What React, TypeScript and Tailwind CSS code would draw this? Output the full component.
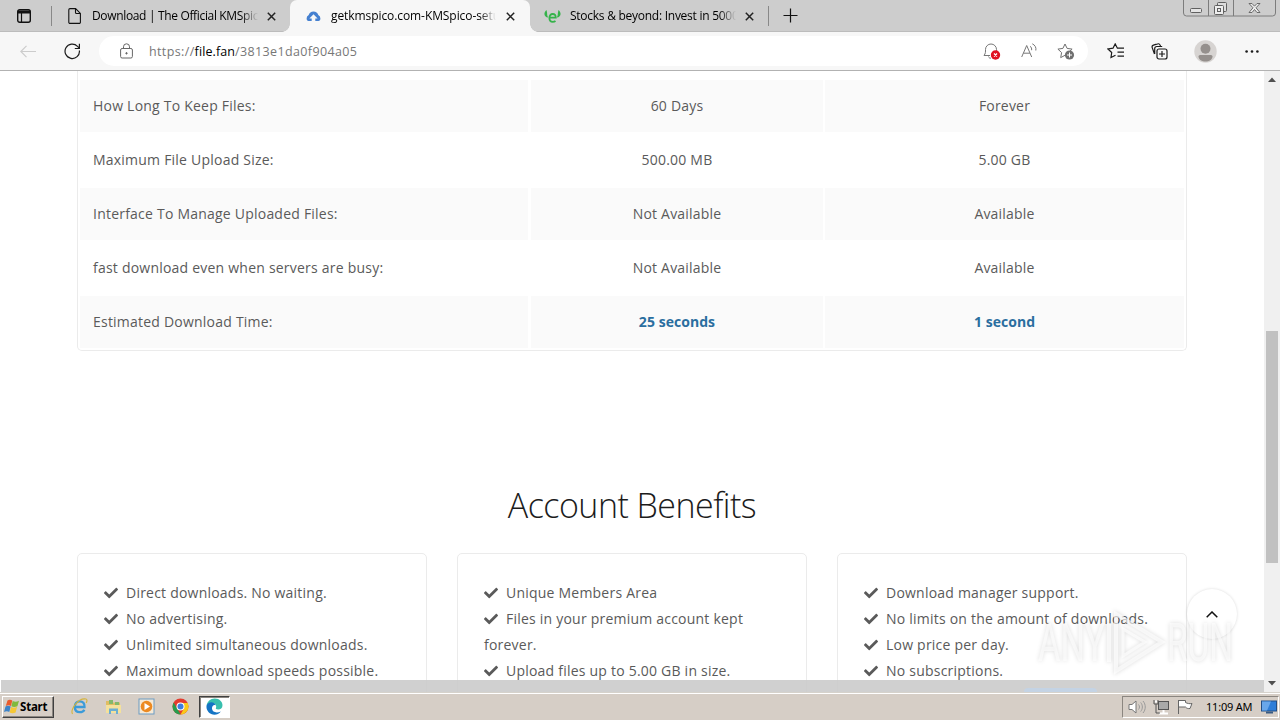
import type { ReactNode } from "react"
import { FaCheck } from "react-icons/fa"

const rows = [
  { label: "How Long To Keep Files:", free: "60 Days", premium: "Forever" },
  { label: "Maximum File Upload Size:", free: "500.00 MB", premium: "5.00 GB" },
  { label: "Interface To Manage Uploaded Files:", free: "Not Available", premium: "Available" },
  { label: "fast download even when servers are busy:", free: "Not Available", premium: "Available" },
  { label: "Estimated Download Time:", free: "25 seconds", premium: "1 second", strong: true },
]

const benefits = [
  ["Direct downloads. No waiting.", "No advertising.", "Unlimited simultaneous downloads.", "Maximum download speeds possible."],
  ["Unique Members Area", "Files in your premium account kept forever.", "Upload files up to 5.00 GB in size."],
  ["Download manager support.", "No limits on the amount of downloads.", "Low price per day.", "No subscriptions."],
]

function CloseX() {
  return (
    <svg className="h-[9px] w-[9px] shrink-0" viewBox="0 0 9 9" fill="none" stroke="#222" strokeWidth="1.5">
      <path d="M.8.8l7.4 7.4M8.2.8L.8 8.2" />
    </svg>
  )
}

function TabTitle({ children, className }: { children: ReactNode; className: string }) {
  return (
    <span className={"block shrink-0 overflow-hidden whitespace-nowrap text-[12px] leading-[18px] text-black mask-r-from-90% mask-r-to-100% " + className}>
      {children}
    </span>
  )
}

function TabStrip() {
  return (
    <div className="flex h-8 shrink-0 bg-[#cdcdcd] shadow-[inset_0_-1px_0_#bcbcbc]">
      <div className="flex w-[51px] items-center pl-[17px]">
        <svg className="h-[14px] w-[14px]" viewBox="0 0 14 14" fill="none" stroke="#111">
          <rect x=".7" y=".7" width="12.6" height="12.6" rx="2" strokeWidth="1.4" />
          <path d="M1 3h12" strokeWidth="3" />
          <path d="M4.5 4v9" strokeWidth="1.2" />
        </svg>
      </div>
      <div className="mt-[6px] h-5 w-px bg-[#888]" />
      <div className="flex w-[238px] items-center pl-4">
        <svg className="h-4 w-[13px] shrink-0" viewBox="0 0 13 16" fill="none" stroke="#111" strokeWidth="1.1">
          <path d="M2 .6h5.6l4.8 4.8v8.8a1.2 1.2 0 0 1-1.2 1.2H2A1.2 1.2 0 0 1 .8 14.2V1.8A1.2 1.2 0 0 1 2 .6zM7.5.8v3.7a1 1 0 0 0 1 1h3.7" />
        </svg>
        <TabTitle className="ml-[11px] mr-[9px] w-[166px] tracking-[-0.34px]">Download | The Official KMSpico</TabTitle>
        <CloseX />
      </div>
      <div className="relative flex w-[240px] items-center rounded-t-[7px] bg-[#f7f7f7] pl-4">
        <span className="absolute -left-2 bottom-0 h-2 w-2 bg-[radial-gradient(circle_at_0_0,transparent_7.5px,#f7f7f7_8px)]" />
        <span className="absolute -right-2 bottom-0 h-2 w-2 bg-[radial-gradient(circle_at_100%_0,transparent_7.5px,#f7f7f7_8px)]" />
        <svg className="h-[14px] w-[15px] shrink-0" viewBox="0 0 15 14">
          <path d="M.6 9.800A4 4 0 0 1 2.700 6 5 5 0 0 1 12.300 6a4 4 0 0 1 2.100 3.800c0 1.200-.7 2.200-1.900 2.200H9.300V9.600h2.300L7.500 5.300 3.400 9.600h2.300V12H2.500C1.300 12 .6 11 .6 9.800z" fill="#4580d0" />
        </svg>
        <TabTitle className="ml-[10px] mr-[10px] w-[165px] tracking-[-0.08px]">getkmspico.com-KMSpico-setup</TabTitle>
        <CloseX />
      </div>
      <div className="flex w-[238px] items-center pl-[14px]">
        <svg className="h-[13px] w-[17px] shrink-0" viewBox="0 0 17 13">
          <path d="M2.400 0C-.8 3 0 7 4.200 7.500 2.600 5 3.700 3.500 2.400 0zM14.600 0c3.200 3 2.400 7-1.800 7.500C14.400 5 13.300 3.500 14.600 0z" fill="#35b34a" />
          <path d="M5.700 7.700h6.100c0-2.400-1.100-3.700-3.100-3.700-2 0-3.300 1.500-3.300 3.900 0 2.600 1.300 3.900 3.400 3.900 1.100 0 2-.3 2.700-.8" fill="none" stroke="#35b34a" strokeWidth="1.800" />
        </svg>
        <TabTitle className="ml-[9px] mr-[9px] w-[166px] tracking-[-0.26px]">Stocks &amp; beyond: Invest in 5000+</TabTitle>
        <CloseX />
      </div>
      <div className="mt-[6px] h-5 w-px bg-[#888]" />
      <svg className="ml-[14px] mt-[8px] h-[15px] w-[15px]" viewBox="0 0 15 15" stroke="#111" strokeWidth="1.2">
        <path d="M7.500 .5v14M.5 7.500h14" />
      </svg>
      <svg className="ml-auto mr-[4px] h-[17px] w-[93px]" viewBox="0 0 93 17" fill="none" stroke="#606060">
        <path d="M.5 0v13a3 3 0 0 0 3 3h86a3 3 0 0 0 3-3V0M25.500 0v16M50.500 0v16" stroke="#7c7c7c" />
        <rect x="7.500" y="8.500" width="11" height="4" rx="1" fill="#e4e4e4" />
        <rect x="34.500" y="2.500" width="9" height="9" rx="1" fill="#ddd" />
        <rect x="31.500" y="5.500" width="9" height="9" rx="1" fill="#eee" />
        <rect x="34.500" y="8.500" width="3" height="3" />
        <path d="M66 3.500h3l2.500 2.700L74 3.500h3l-4 4.300 4 4.700h-3l-2.500-3-2.500 3h-3l4-4.700z" fill="#eee" strokeWidth=".9" />
      </svg>
    </div>
  )
}

function Toolbar() {
  return (
    <div className="flex h-[39px] shrink-0 items-center border-b border-[#b2b2b2] bg-[#f7f7f7]">
      <svg className="ml-5 h-[13px] w-4" viewBox="0 0 16 13" fill="none" stroke="#ccc" strokeWidth="1.2">
        <path d="M6.500.8L.8 6.500l5.700 5.700M1 6.500h15" />
      </svg>
      <svg className="ml-[28px] h-[17px] w-[17px]" viewBox="0 0 17 17" fill="none" stroke="#1b1b1b" strokeWidth="1.2">
        <path d="M15.400 7.500A7.200 7.200 0 1 1 13.500 3.400L15.300 5.200M15.400.8v4.700h-4.600" />
      </svg>
      <div className="ml-[18px] flex h-[30px] w-[989px] items-center rounded-full bg-white pl-[21px]">
        <svg className="h-4 w-[13px]" viewBox="0 0 13 16" fill="none" stroke="#666">
          <rect x=".6" y="5.500" width="11.800" height="9.500" rx="1.500" />
          <path d="M3.500 5.500V3.800a3 3 0 0 1 6 0v1.700" />
          <circle cx="6.500" cy="10.300" r=".7" fill="#666" />
        </svg>
        <span className="ml-[16px] mt-px whitespace-nowrap text-[12.5px] leading-[18px] tracking-[0.37px] text-[#777]">
          https://<span className="tracking-[0.1px] text-black">file.fan</span>/3813e1da0f904a05
        </span>
        <div className="ml-auto mr-[13px] flex items-center">
          <svg className="h-[18px] w-[18px]" viewBox="0 0 18 18" fill="none" stroke="#777">
            <path d="M1 13.500c1.700-2 1.500-4 1.500-6a5.500 5.500 0 0 1 11 0v2M1 13.500h6M5.500 14.500c.5 1.500 1.500 2 2.500 1.500" />
            <circle cx="12.500" cy="13" r="4.700" fill="#e01020" stroke="none" />
            <path d="M11 11.500l3 3m0-3l-3 3" stroke="#fff" strokeWidth="1.2" />
          </svg>
          <svg className="ml-[20px] h-[16px] w-4" viewBox="0 0 16 16" fill="none" stroke="#777">
            <path d="M.7 14L5.700 2.500 10.700 14M2.500 10.200h6.400M9 3.200c1.300.8 1.900 2.300 1.600 4M11.300.8c2.900 1.400 4.100 3.800 3.500 6.700" />
          </svg>
          <svg className="ml-[20px] h-[17px] w-[18px]" viewBox="0 0 18 17" fill="none" stroke="#707070">
            <path d="M8 1l2.100 4.400 5 .7-3.700 3.500M8 1L5.900 5.400l-5 .7 3.700 3.500-.9 5L8 12.300" />
            <circle cx="12.500" cy="12" r="4.600" fill="#707070" stroke="none" />
            <path d="M12.500 9.500v5M10 12h5" stroke="#fff" />
          </svg>
        </div>
      </div>
      <svg className="ml-[19px] h-4 w-[18px]" viewBox="0 0 18 16" fill="none" stroke="#1b1b1b" strokeWidth="1.2">
        <path d="M8.500 12.200L4 14.500l.7-5L1 6l5-.8L8.200.9l2.200 4.300H17M10.500 9.200H17M10.500 13.200H17" />
      </svg>
      <svg className="ml-[26px] h-[17px] w-[17px]" viewBox="0 0 17 17" fill="none" stroke="#1b1b1b" strokeWidth="1.2">
        <rect x="6" y="6" width="10" height="10" rx="2" />
        <path d="M11 8v6M8 11h6M3.500 11L1.200 4.600a2 2 0 0 1 1.200-2.500L6.600.9a2 2 0 0 1 2.500 1.200l.5 1.300M3.700 11V5.500a2 2 0 0 1 2-2h5.500" />
      </svg>
      <svg className="ml-[26px] h-[23px] w-[23px]" viewBox="0 0 23 23">
        <circle cx="11.500" cy="11.500" r="11.200" fill="#d7d4d2" />
        <circle cx="11.500" cy="8.700" r="5" fill="#95908d" />
        <path d="M4.500 16.500c0-1 1-1.500 2-1.500h10c1 0 2 .5 2 1.500 0 3-3.500 5-7 5s-7-2-7-5z" fill="#95908d" />
      </svg>
      <svg className="ml-[28px] h-[3px] w-[14px]" viewBox="0 0 14 3" fill="#1b1b1b">
        <circle cx="1.600" cy="1.500" r="1.300" />
        <circle cx="7" cy="1.500" r="1.300" />
        <circle cx="12.400" cy="1.500" r="1.300" />
      </svg>
    </div>
  )
}

function PlanTable() {
  return (
    <div className="ml-[77px] h-[280px] w-[1110px] shrink-0 rounded-b-[5px] border border-t-0 border-[#ebebeb] px-[2px] pt-[9px]">
      {rows.map((row, i) => {
        const bg = i % 2 === 0 ? "bg-[#fafafa]" : ""
        const value = row.strong ? "font-bold text-[#2a6e9f] tracking-[0.05px]" : "tracking-[0.2px]"
        return (
          <div key={row.label} className="mb-[2px] flex h-[52px] items-center text-center leading-[52px]">
            <div className={"mr-[3px] w-[448px] pl-[13px] text-left tracking-[0.22px] " + bg}>{row.label}</div>
            <div className={"mr-[2px] w-[292px] " + bg + " " + value}>{row.free}</div>
            <div className={"w-[359px] " + bg + " " + value}>{row.premium}</div>
          </div>
        )
      })}
    </div>
  )
}

function Watermark() {
  return (
    <svg className="absolute left-[1030px] top-[533px] h-[76px] w-[212px] drop-shadow-[0_0_2px_rgba(0,0,0,0.22)]" viewBox="0 0 212 76">
      <g fill="#fff" fillOpacity=".6" fontFamily="Roboto, 'Liberation Sans', sans-serif" fontSize="53" fontWeight="400">
        <text x="8" y="57" textLength="67" lengthAdjust="spacingAndGlyphs">ANY</text>
        <text x="137" y="57" textLength="66" lengthAdjust="spacingAndGlyphs">RUN</text>
      </g>
      <g fill="none" stroke="#fff" strokeOpacity=".65" strokeWidth="4">
        <path d="M79 19v39M86 10v57l46-29z" />
        <path d="M93 25v27l22-14z" strokeWidth="3" />
      </g>
    </svg>
  )
}

function Page() {
  return (
    <div className="relative flex min-w-0 flex-1 flex-col overflow-hidden bg-white text-[14px] text-[#5a5a5a]">
      <PlanTable />
      <h2 className="mt-[130px] h-[48px] text-center text-[34px] font-light leading-[48px] tracking-[-0.53px] text-[#1c1c1c]">Account Benefits</h2>
      <div className="ml-[77px] mt-[24px] flex gap-[30px]">
        {benefits.map((items) => (
          <ul key={items[0]} className="h-[200px] w-[350px] rounded-[5px] border border-[#ebebeb] p-[26px] leading-[26px] tracking-[0.22px]">
            {items.map((item) => (
              <li key={item}>
                <FaCheck className="mr-2 inline h-[14px] w-[14px] align-[-2px]" />
                {item}
              </li>
            ))}
          </ul>
        ))}
      </div>
      <div className="absolute left-[1187px] top-[518px] flex h-[50px] w-[50px] items-center justify-center rounded-full bg-white shadow-[0_0_3px_rgba(0,0,0,0.15)]">
        <svg className="h-[7px] w-3" viewBox="0 0 12 7" fill="none" stroke="#111" strokeWidth="1.5">
          <path d="M.7 6.300L6 1l5.300 5.300" />
        </svg>
      </div>
      <Watermark />
      <div className="absolute inset-x-0 bottom-0 left-px flex h-3 items-end bg-[#cbcbcb]/90">
        <div className="ml-[1023px] h-[4px] w-[73px] rounded-t-sm bg-[#c4d3e4]" />
      </div>
    </div>
  )
}

function ScrollBar() {
  return (
    <div className="flex w-4 flex-col items-center bg-[#f0f0f0]">
      <svg className="mt-[6px] h-[5px] w-2" viewBox="0 0 8 5" fill="#505050">
        <path d="M0 5l4-4.500L8 5z" />
      </svg>
      <div className="mt-[249px] h-[232px] w-3 bg-[#c1c1c1]" />
      <svg className="mt-[118px] h-[5px] w-2" viewBox="0 0 8 5" fill="#505050">
        <path d="M0 0l4 4.500L8 0z" />
      </svg>
    </div>
  )
}

function StartFlag() {
  return (
    <svg className="h-[15px] w-4 shrink-0" viewBox="0 0 16 15">
      <path d="M3.500 1.500C5 .4 6.700.5 8.300 1.500L7 7C5.300 6 3.600 6 1.800 7z" fill="#e95b2d" />
      <path d="M8.700 1.900c2 1 4 1 6.300-.2l-1.600 5.500c-2.200 1-4.200 1-6 .1z" fill="#80b93c" />
      <path d="M1.500 7.600c1.700-1 3.400-1 5.200 0L5.300 13C3.600 12 1.900 12 0 13z" fill="#3c83c8" />
      <path d="M7.100 8c2 .9 3.800.9 6-.2l-1.500 5.700c-2.200 1-4.100.9-6 0z" fill="#f5c735" />
    </svg>
  )
}

function Taskbar() {
  return (
    <div className="flex h-[28px] shrink-0 items-center border-t border-[#d6d2cb] bg-[#d6cec6] shadow-[inset_0_1px_0_#fff]">
      <div className="ml-[2px] flex h-[22px] w-[52px] items-center border border-b-[#404040] border-l-white border-r-[#404040] border-t-white pl-px shadow-[inset_-1px_-1px_0_#8b8680]">
        <StartFlag />
        <span className="font-['Noto_Sans','Open_Sans',sans-serif] text-[11.5px] font-bold leading-[18px] tracking-[-0.2px] text-black">Start</span>
      </div>
      <svg className="ml-[17px] h-[17px] w-[17px]" viewBox="0 0 17 17" fill="none">
        <path d="M4.500 9h9c.3-3.500-1.700-5.700-4.700-5.700-3 0-5 2.300-5 5.500 0 3.300 2 5.400 5 5.400 2.200 0 3.700-.8 4.500-2.500" stroke="#3b9bd9" strokeWidth="2.3" />
        <path d="M1.500 16C-.8 12 7-.5 15 1c1.500.5 1 2.500.2 4" stroke="#d5b43b" strokeWidth="1.1" />
      </svg>
      <svg className="ml-[17px] h-[16px] w-[17px]" viewBox="0 0 17 16">
        <path d="M1 2h5l1.500 1.500H15V13H1z" fill="#e0bd62" />
        <path d="M4 1h4v4H4zM10 3h4v4h-4z" fill="#83b86b" />
        <path d="M1 6h15v8H1z" fill="#f4e19b" />
        <path d="M4 15V9.500h9V15h-2v-3H6v3z" fill="#6caed2" />
      </svg>
      <svg className="ml-[16px] h-[17px] w-[17px]" viewBox="0 0 17 17">
        <rect x="1" y="1" width="15" height="15" fill="#f6e9d5" stroke="#6b9bc4" />
        <circle cx="8.500" cy="8.500" r="5.800" fill="#ec8a22" />
        <path d="M6.500 5v7l5.500-3.500z" fill="#fff" />
      </svg>
      <svg className="ml-[17px] h-[17px] w-[17px]" viewBox="0 0 17 17">
        <circle cx="8.500" cy="8.500" r="8" fill="#e33b2e" />
        <path d="M1.600 4.500L6 12l2.500 4.500A8 8 0 0 1 1.600 4.500z" fill="#279c4d" />
        <path d="M15.700 5H9l3 5.500-3.500 6A8 8 0 0 0 15.700 5z" fill="#fac918" />
        <circle cx="8.500" cy="8.500" r="4" fill="#fff" />
        <circle cx="8.500" cy="8.500" r="3" fill="#3d7de0" />
      </svg>
      <div className="ml-[10px] flex h-[22px] w-[31px] items-center justify-center border border-b-white border-l-[#404040] border-r-white border-t-[#404040] bg-white shadow-[inset_1px_1px_0_#8b8680]">
        <svg className="h-[17px] w-[17px]" viewBox="0 0 17 17">
          <path d="M.5 8C1 3.500 4.500.5 8.700.5c5 0 7.800 3.600 7.800 6.700 0 3-2 4.200-4.200 4.200-2.200 0-2.900-.8-2.300-1.700C10.900 8 9.200 5 6 5 3.200 5 .9 6.600.5 8z" fill="#38bfae" />
          <path d="M.5 8C1.500 3.500 8.500 3 9.700 7.500 8 6 5.700 8 6 10.800c.4 3.500 4.500 4.500 8.800 2.700-3 4.300-9.300 4-12.200.7C.9 12.300.3 10.200.5 8z" fill="#1474c4" />
        </svg>
      </div>
      <div className="ml-auto mr-px flex h-[22px] w-[157px] items-center border border-b-white border-l-[#8b8680] border-r-white border-t-[#8b8680] pl-[5px]">
        <svg className="h-4 w-[18px]" viewBox="0 0 18 16" stroke="#777" fill="none">
          <path d="M1 5.500h3L8 2v12l-4-3.500H1z" fill="#fff" />
          <path d="M10.500 5.500c1.300 1.500 1.300 3.500 0 5M12.700 3.500c2.200 2.700 2.200 6.300 0 9M15 2c3 3.500 3 8.500 0 12" stroke="#999" />
        </svg>
        <svg className="ml-[7px] h-4 w-4" viewBox="0 0 16 16" stroke="#555" fill="none">
          <rect x="5.500" y="2.500" width="10" height="8" fill="#a9a9a9" />
          <path d="M6 14.500h9M10.500 11v3" stroke="#fff" strokeWidth="2" />
          <path d="M1 1v4h4V1M3 5v9h4" />
          <path d="M2 1.500h2v2H2z" fill="#fff" stroke="none" />
        </svg>
        <svg className="ml-[8px] h-4 w-4" viewBox="0 0 16 16" stroke="#666" fill="#fff">
          <path d="M1.500 1v14M1.500 1.500h7V3.500c2 1 4 1.500 6.500 1l-2 5c-2 .3-3.500-.2-4.500-1.500h-7z" />
        </svg>
        <span className="ml-[13px] whitespace-nowrap font-['Noto_Sans','Open_Sans',sans-serif] text-[11px] leading-[18px] tracking-[-0.2px] text-black">11:09 AM</span>
        <svg className="ml-auto mr-px h-[14px] w-[16px]" viewBox="0 0 16 14">
          <rect x=".5" y="1" width="15" height="10" fill="#2f7ed8" stroke="#234e85" />
          <path d="M1 1.500h9L6 10.500H1z" fill="#69a7ea" />
          <path d="M5 12.500h7" stroke="#385a83" strokeWidth="2" />
        </svg>
      </div>
    </div>
  )
}

export default function App() {
  return (
    <div className="flex h-[720px] w-[1280px] flex-col overflow-hidden bg-white font-['Open_Sans','Noto_Sans',sans-serif]">
      <TabStrip />
      <Toolbar />
      <div className="flex h-[621px] shrink-0">
        <Page />
        <ScrollBar />
      </div>
      <Taskbar />
    </div>
  )
}
